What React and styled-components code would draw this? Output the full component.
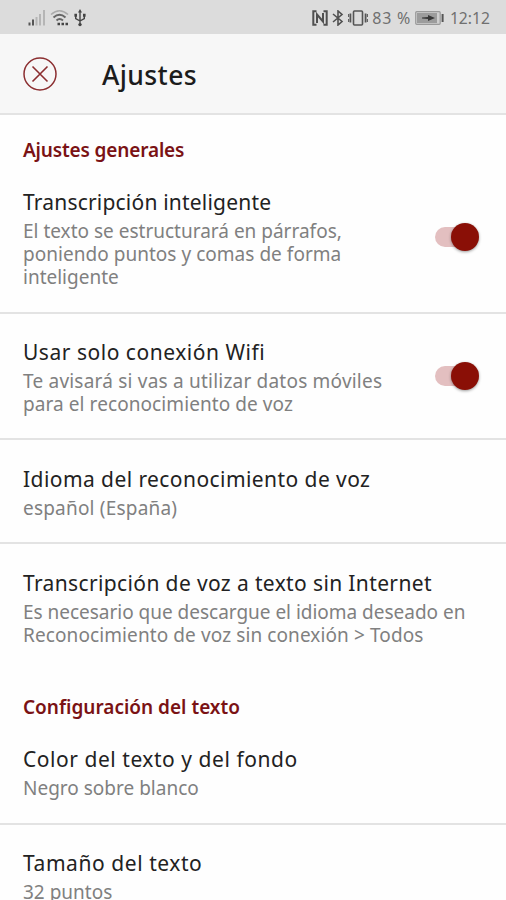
import React from 'react';
import styled, { createGlobalStyle } from 'styled-components';

const ACCENT = '#7a1214';
const SWITCH_ON = '#8a0f06';
const SWITCH_TRACK = '#e3bfc0';
const DIVIDER = '#e3e3e3';

const GlobalStyle = createGlobalStyle`
  * {
    box-sizing: border-box;
  }
  body {
    margin: 0;
    background: #fefefe;
    font-family: 'Noto Sans', sans-serif;
  }
`;

const Signal = () => (
  <svg width="18" height="18" viewBox="0 0 18 18">
    <path d="M1.5 16.5v-3M5 16.5v-6" stroke="#555" strokeWidth="2" />
    <path d="M8.5 16.5V8M12 16.5V5M16 16.5V1" stroke="#b5b5b5" strokeWidth="2" />
  </svg>
);

const Wifi = () => (
  <svg width="20" height="18" viewBox="0 0 20 18" fill="none">
    <path d="M1 5.5Q9.5 -2 18 5.5" stroke="#aaa" strokeWidth="1.6" />
    <path d="M3.5 8.5Q9.5 3 15.5 8.5M6.5 11.5Q9.5 8.5 13 11.5" stroke="#666" strokeWidth="1.9" />
    <path d="M7.5 15h2.5M11.5 15H14M15.5 15H18" stroke="#444" strokeWidth="2.6" />
  </svg>
);

const Usb = () => (
  <svg width="12" height="18" viewBox="0 0 12 18" fill="none" stroke="#444" strokeWidth="1.4">
    <path d="M6 2v13M1.7 6v3.5L6 12M10.3 6v3.5L6 12" />
    <path d="M6 0l2 3.4H4zM.4 4.8H3v3H.4zM9 4.8h2.6v3H9z" fill="#444" stroke="none" />
    <circle cx="6" cy="15.6" r="1.7" fill="#444" stroke="none" />
  </svg>
);

const Nfc = () => (
  <svg width="16" height="16" viewBox="0 0 16 16" fill="none" stroke="#505050">
    <path d="M4.5 1.2H1.3v13.6h3.2M11.5 1.2h3.2v13.6h-3.2" strokeWidth="2" />
    <path d="M5 13V4.5l6 7V3" strokeWidth="2" />
  </svg>
);

const Bluetooth = () => (
  <svg width="12" height="16" viewBox="0 0 12 16" fill="none" stroke="#505050" strokeWidth="1.6">
    <path d="M1 4l9 7.5L6 15V1l4 3.5L1 12" />
  </svg>
);

const Vibrate = () => (
  <svg width="20" height="16" viewBox="0 0 20 16" fill="none" stroke="#555">
    <rect x="5.5" y="1" width="9" height="14" rx="1" strokeWidth="1.6" />
    <path d="M2.4 3.5v9M17.6 3.5v9" strokeWidth="1.8" />
    <path d="M.6 4v3M.6 9v3M19.4 4v3M19.4 9v3" strokeWidth="1" />
  </svg>
);

const Battery = () => (
  <svg width="29" height="14" viewBox="0 0 29 14">
    <rect x=".7" y=".7" width="24.5" height="12.6" rx="1" fill="#cfcfcf" stroke="#9a9a9a" strokeWidth="1.2" />
    <rect x="2" y="2" width="20" height="10" fill="#9c9c9c" />
    <path d="M7 6.4l6-.4V4l7 3-7 3V8l-6-.4z" fill="#383838" />
    <path d="M27.6 3v8" stroke="#555" strokeWidth="2" />
  </svg>
);

const CloseIcon = () => (
  <svg width="34" height="34" viewBox="0 0 34 34" fill="none" stroke="#8b2e30">
    <circle cx="17" cy="17" r="16" strokeWidth="1.5" />
    <path d="M9.5 9.5l15 15M24.5 9.5l-15 15" strokeWidth="1.6" />
  </svg>
);

const Setting = ({
  title, spacing, lines, on, last,
}) => (
  <Item $last={last}>
    <div>
      <ItemTitle $spacing={spacing}>{title}</ItemTitle>
      {lines.map(([text, lineSpacing]) => (
        <ItemLine key={text} $spacing={lineSpacing}>{text}</ItemLine>
      ))}
    </div>
    {on && <Switch><Knob /></Switch>}
  </Item>
);

const App = () => (
  <Screen>
    <GlobalStyle />
    <StatusBar>
      <StatusLeft>
        <Signal />
        <Wifi />
        <Usb />
      </StatusLeft>
      <StatusRight>
        <Nfc />
        <Bluetooth />
        <Vibrate />
        <Percent>83 %</Percent>
        <Battery />
        <Clock>12:12</Clock>
      </StatusRight>
    </StatusBar>
    <Header>
      <CloseIcon />
      <HeaderTitle>Ajustes</HeaderTitle>
    </Header>
    <SectionTitle $top={22} $height={48.7} $spacing={-0.15}>Ajustes generales</SectionTitle>
    <Setting
      title="Transcripción inteligente"
      spacing={0.2}
      lines={[
        ['El texto se estructurará en párrafos,'],
        ['poniendo puntos y comas de forma', 0.03],
        ['inteligente'],
      ]}
      on
    />
    <Setting
      title="Usar solo conexión Wifi"
      spacing={0.52}
      lines={[
        ['Te avisará si vas a utilizar datos móviles', 0.21],
        ['para el reconocimiento de voz', 0.08],
      ]}
      on
    />
    <Setting
      title="Idioma del reconocimiento de voz"
      spacing={0.43}
      lines={[['español (España)', 0.2]]}
    />
    <Setting
      title="Transcripción de voz a texto sin Internet"
      spacing={0.37}
      lines={[
        ['Es necesario que descargue el idioma deseado en', -0.02],
        ['Reconocimiento de voz sin conexión > Todos', 0.1],
      ]}
      last
    />
    <SectionTitle $top={25} $height={51.7}>Configuración del texto</SectionTitle>
    <Setting
      title="Color del texto y del fondo"
      spacing={0.54}
      lines={[['Negro sobre blanco']]}
    />
    <Setting title="Tamaño del texto" spacing={0.56} lines={[['32 puntos']]} last />
  </Screen>
);

const Screen = styled.div`
  width: 506px;
  height: 900px;
  overflow: hidden;
`;

const StatusBar = styled.div`
  display: flex;
  justify-content: space-between;
  align-items: center;
  height: 34px;
  padding: 1px 16px 0 28px;
  background: #dcdcdc;
`;

const StatusLeft = styled.div`
  display: flex;
  align-items: center;
  gap: 4px;
`;

const StatusRight = styled.div`
  display: flex;
  align-items: center;
  color: #707070;
  font-size: 16px;
  gap: 4px;
`;

const Percent = styled.span`
  letter-spacing: 0.7px;
`;

const Clock = styled.span`
  margin-left: 2px;
  font-size: 15.7px;
`;

const Header = styled.header`
  display: flex;
  align-items: center;
  height: 81px;
  padding: 0 23px;
  gap: 45px;
  background: #f7f7f7;
  border-bottom: 2px solid ${DIVIDER};
`;

const HeaderTitle = styled.h1`
  margin: 2px 0 0;
  font-size: 26.5px;
  font-weight: 500;
  line-height: 36px;
  letter-spacing: 0.4px;
  color: #1c1c1c;
`;

const SectionTitle = styled.h2`
  height: ${props => props.$height}px;
  margin: 0;
  padding: ${props => props.$top}px 23px 0;
  font-size: 19px;
  font-weight: 600;
  line-height: 27px;
  letter-spacing: ${props => props.$spacing || 0}px;
  color: ${ACCENT};
`;

const Item = styled.section`
  display: flex;
  align-items: center;
  justify-content: space-between;
  padding: 25.3px 27px 22.6px 23px;
  border-bottom: ${props => (props.$last ? '0' : `2px solid ${DIVIDER}`)};
  white-space: nowrap;
`;

const ItemTitle = styled.div`
  margin-bottom: 4px;
  font-size: 21px;
  line-height: 27px;
  letter-spacing: ${props => props.$spacing || 0}px;
  color: #222;
`;

const ItemLine = styled.div`
  font-size: 19px;
  line-height: 23px;
  letter-spacing: ${props => props.$spacing || 0}px;
  color: #808080;
`;

const Switch = styled.div`
  display: flex;
  align-items: center;
  margin-bottom: 3px;

  &::before {
    content: '';
    width: 34px;
    height: 20px;
    margin-right: -18px;
    border-radius: 10px;
    background: ${SWITCH_TRACK};
  }
`;

const Knob = styled.span`
  width: 28px;
  height: 28px;
  border-radius: 50%;
  background: ${SWITCH_ON};
  box-shadow: 0 1px 3px rgba(0, 0, 0, 0.4);
`;

export default App;
